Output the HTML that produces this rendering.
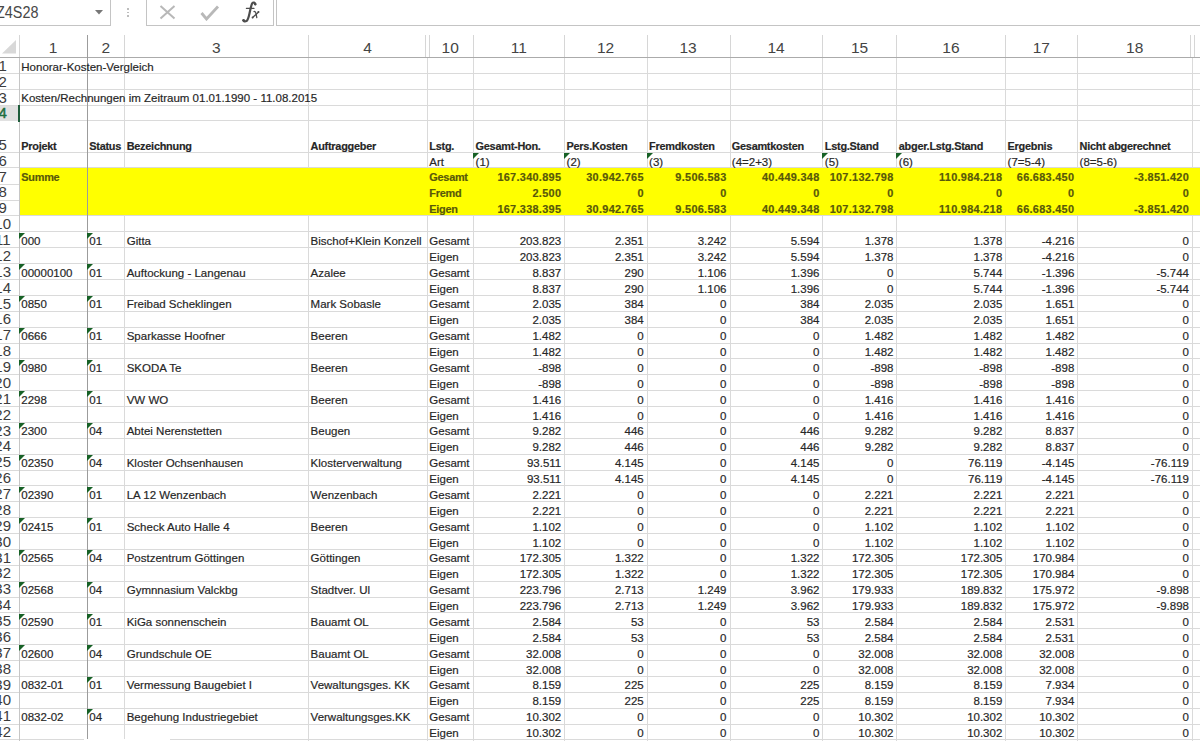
<!DOCTYPE html>
<html><head><meta charset="utf-8"><style>
html,body{margin:0;padding:0;background:#fff;}
body{width:1200px;height:741px;position:relative;overflow:hidden;font-family:"Liberation Sans", sans-serif;}
.box{position:absolute;border:1px solid #c4c4c4;background:#fff;box-sizing:border-box;}
.nb{position:absolute;font-size:15.5px;color:#484848;line-height:18px;transform:scale(0.93,1.1);transform-origin:0 0;}
.ch{position:absolute;top:38.5px;height:18px;line-height:18px;text-align:center;font-size:15.5px;color:#444;}
.rh{position:absolute;left:-13.3px;width:32px;height:16px;line-height:16px;text-align:center;font-size:15px;color:#3c3c3c;}
.rh.sel{color:#1f6e40;-webkit-text-stroke:0.5px #1f6e40;}
.hl{position:absolute;left:0;width:1200px;height:1px;background:#dadada;}
.vl{position:absolute;width:1px;background:#dadada;}
.c{position:absolute;font-size:11.5px;line-height:16px;height:16px;white-space:nowrap;color:#262626;-webkit-text-stroke:0.18px currentColor;}
.tri{position:absolute;width:0;height:0;border-top:6px solid #176126;border-right:6px solid transparent;}
</style></head>
<body>
<div class="box" style="left:-2px;top:-2px;width:112.5px;height:28px"></div>
<div class="nb" style="left:-4.5px;top:3px">Z4S28</div>
<svg style="position:absolute;left:95px;top:10px" width="9" height="5"><path d="M0 0 L8 0 L4 4.5 Z" fill="#777"/></svg>
<div style="position:absolute;left:127px;top:8px;width:1.5px;height:1.5px;background:#bdbdbd"></div>
<div style="position:absolute;left:127px;top:11.5px;width:1.5px;height:1.5px;background:#bdbdbd"></div>
<div style="position:absolute;left:127px;top:15px;width:1.5px;height:1.5px;background:#bdbdbd"></div>
<div class="box" style="left:146px;top:-2px;width:127.5px;height:28px"></div>
<div class="box" style="left:276px;top:-2px;width:930px;height:28px"></div>
<svg style="position:absolute;left:159px;top:5px" width="18" height="15"><path d="M1.5 1 L15.5 13.5 M15.5 1 L1.5 13.5" stroke="#b8b8b8" stroke-width="2" fill="none"/></svg>
<svg style="position:absolute;left:200px;top:5px" width="20" height="16"><path d="M1.5 8 L6.5 14 L18 1.5" stroke="#b8b8b8" stroke-width="2.8" fill="none"/></svg>
<svg style="position:absolute;left:236px;top:0" width="30" height="25" viewBox="236 0 30 25"><g stroke="#4d4d4d" fill="none" stroke-linecap="round"><path d="M255.4 4.3 C255 2.4 253.2 1.9 252.2 3.4 C251.3 4.9 250.6 8.5 249.7 12.5 C248.8 16.5 248.2 20 246.4 21.1 C245 21.8 243.8 21.3 243.5 20.5" stroke-width="2.2"/><path d="M246.4 8.4 L254 8.4" stroke-width="1.2"/><path d="M254 11.6 C255 11.2 255.6 12 256 13.5 L256.8 17.6" stroke-width="1.3"/><path d="M258.6 12 L252.6 17.6" stroke-width="1.3"/></g><g fill="#4d4d4d"><circle cx="255.1" cy="4" r="1.3"/><circle cx="243.6" cy="20.3" r="1.3"/><circle cx="258.4" cy="12" r="1"/><circle cx="252.6" cy="17.5" r="1"/></g></svg>
<div style="position:absolute;left:0;top:57px;width:1200px;height:1px;background:#ababab"></div>
<svg style="position:absolute;left:0;top:39px" width="17" height="15"><path d="M2 14.5 L16 14.5 L16 1 Z" fill="#d8d8d8"/></svg>
<div style="position:absolute;left:19px;top:35px;width:1px;height:22px;background:#d6d6d6"></div>
<div style="position:absolute;left:87px;top:35px;width:1px;height:22px;background:#9a9a9a"></div>
<div style="position:absolute;left:124px;top:35px;width:1px;height:22px;background:#d6d6d6"></div>
<div style="position:absolute;left:308px;top:35px;width:1px;height:22px;background:#d6d6d6"></div>
<div style="position:absolute;left:425px;top:35px;width:1px;height:22px;background:#d6d6d6"></div>
<div style="position:absolute;left:429px;top:35px;width:1px;height:22px;background:#d6d6d6"></div>
<div style="position:absolute;left:473px;top:35px;width:1px;height:22px;background:#d6d6d6"></div>
<div style="position:absolute;left:564px;top:35px;width:1px;height:22px;background:#d6d6d6"></div>
<div style="position:absolute;left:647px;top:35px;width:1px;height:22px;background:#d6d6d6"></div>
<div style="position:absolute;left:730px;top:35px;width:1px;height:22px;background:#d6d6d6"></div>
<div style="position:absolute;left:822px;top:35px;width:1px;height:22px;background:#d6d6d6"></div>
<div style="position:absolute;left:896px;top:35px;width:1px;height:22px;background:#d6d6d6"></div>
<div style="position:absolute;left:1005px;top:35px;width:1px;height:22px;background:#d6d6d6"></div>
<div style="position:absolute;left:1077px;top:35px;width:1px;height:22px;background:#d6d6d6"></div>
<div style="position:absolute;left:1190px;top:35px;width:1px;height:22px;background:#d6d6d6"></div>
<div style="position:absolute;left:1194px;top:35px;width:1px;height:22px;background:#d6d6d6"></div>
<div class="ch" style="left:19px;width:68px">1</div>
<div class="ch" style="left:87px;width:37.4px">2</div>
<div class="ch" style="left:124.4px;width:183.9px">3</div>
<div class="ch" style="left:308.3px;width:118.7px">4</div>
<div class="ch" style="left:427px;width:46.3px">10</div>
<div class="ch" style="left:473.3px;width:90.95px">11</div>
<div class="ch" style="left:564.25px;width:82.5px">12</div>
<div class="ch" style="left:646.75px;width:82.75px">13</div>
<div class="ch" style="left:729.5px;width:93.0px">14</div>
<div class="ch" style="left:822.5px;width:74.0px">15</div>
<div class="ch" style="left:896.5px;width:108.8px">16</div>
<div class="ch" style="left:1005.3px;width:72.0px">17</div>
<div class="ch" style="left:1077.3px;width:114.7px">18</div>
<div class="hl" style="top:73px"></div>
<div class="hl" style="top:89px"></div>
<div class="hl" style="top:105px"></div>
<div class="hl" style="top:120px"></div>
<div class="hl" style="top:152px"></div>
<div class="hl" style="top:184px;width:19px"></div>
<div class="hl" style="top:200px;width:19px"></div>
<div class="hl" style="top:215px"></div>
<div class="hl" style="top:231px"></div>
<div class="hl" style="top:247px"></div>
<div class="hl" style="top:263px"></div>
<div class="hl" style="top:279px"></div>
<div class="hl" style="top:295px"></div>
<div class="hl" style="top:311px"></div>
<div class="hl" style="top:327px"></div>
<div class="hl" style="top:343px"></div>
<div class="hl" style="top:358px"></div>
<div class="hl" style="top:374px"></div>
<div class="hl" style="top:390px"></div>
<div class="hl" style="top:406px"></div>
<div class="hl" style="top:422px"></div>
<div class="hl" style="top:438px"></div>
<div class="hl" style="top:454px"></div>
<div class="hl" style="top:470px"></div>
<div class="hl" style="top:485px"></div>
<div class="hl" style="top:501px"></div>
<div class="hl" style="top:517px"></div>
<div class="hl" style="top:533px"></div>
<div class="hl" style="top:549px"></div>
<div class="hl" style="top:565px"></div>
<div class="hl" style="top:581px"></div>
<div class="hl" style="top:597px"></div>
<div class="hl" style="top:612px"></div>
<div class="hl" style="top:628px"></div>
<div class="hl" style="top:644px"></div>
<div class="hl" style="top:660px"></div>
<div class="hl" style="top:676px"></div>
<div class="hl" style="top:692px"></div>
<div class="hl" style="top:708px"></div>
<div class="hl" style="top:724px"></div>
<div class="hl" style="top:739px"></div>
<div style="position:absolute;left:20px;top:168px;width:1180px;height:47px;background:#ffff00"></div>
<div class="hl" style="top:167px"></div>
<div class="vl" style="left:19px;top:58px;height:110px"></div>
<div class="vl" style="left:19px;top:215px;height:526px"></div>
<div class="vl" style="left:124px;top:58px;height:110px"></div>
<div class="vl" style="left:124px;top:215px;height:526px"></div>
<div class="vl" style="left:308px;top:58px;height:110px"></div>
<div class="vl" style="left:308px;top:215px;height:526px"></div>
<div class="vl" style="left:427px;top:58px;height:110px"></div>
<div class="vl" style="left:427px;top:215px;height:526px"></div>
<div class="vl" style="left:473px;top:58px;height:110px"></div>
<div class="vl" style="left:473px;top:215px;height:526px"></div>
<div class="vl" style="left:564px;top:58px;height:110px"></div>
<div class="vl" style="left:564px;top:215px;height:526px"></div>
<div class="vl" style="left:647px;top:58px;height:110px"></div>
<div class="vl" style="left:647px;top:215px;height:526px"></div>
<div class="vl" style="left:730px;top:58px;height:110px"></div>
<div class="vl" style="left:730px;top:215px;height:526px"></div>
<div class="vl" style="left:822px;top:58px;height:110px"></div>
<div class="vl" style="left:822px;top:215px;height:526px"></div>
<div class="vl" style="left:896px;top:58px;height:110px"></div>
<div class="vl" style="left:896px;top:215px;height:526px"></div>
<div class="vl" style="left:1005px;top:58px;height:110px"></div>
<div class="vl" style="left:1005px;top:215px;height:526px"></div>
<div class="vl" style="left:1077px;top:58px;height:110px"></div>
<div class="vl" style="left:1077px;top:215px;height:526px"></div>
<div class="vl" style="left:1192px;top:58px;height:110px"></div>
<div class="vl" style="left:1192px;top:215px;height:526px"></div>
<div class="vl" style="left:19px;top:58px;height:683px;background:#c6c6c6"></div>
<div style="position:absolute;left:86.5px;top:35px;width:1.5px;height:706px;background:#9c9c9c"></div>
<div class="rh" style="top:57.7px">1</div>
<div class="rh" style="top:73.6px">2</div>
<div class="rh" style="top:89.6px">3</div>
<div style="position:absolute;left:0;top:106px;width:18px;height:15px;background:#e1e1e1"></div>
<div style="position:absolute;left:18px;top:105px;width:2px;height:17px;background:#1f5c3b"></div>
<div class="rh sel" style="top:105.3px">4</div>
<div class="rh" style="top:136.8px">5</div>
<div class="rh" style="top:152.7px">6</div>
<div class="rh" style="top:168.57px">7</div>
<div class="rh" style="top:184.45px">8</div>
<div class="rh" style="top:200.32px">9</div>
<div class="rh" style="top:216.2px">10</div>
<div class="rh" style="top:232.07px">11</div>
<div class="rh" style="top:247.95px">12</div>
<div class="rh" style="top:263.82px">13</div>
<div class="rh" style="top:279.7px">14</div>
<div class="rh" style="top:295.57px">15</div>
<div class="rh" style="top:311.45px">16</div>
<div class="rh" style="top:327.32px">17</div>
<div class="rh" style="top:343.2px">18</div>
<div class="rh" style="top:359.07px">19</div>
<div class="rh" style="top:374.95px">20</div>
<div class="rh" style="top:390.82px">21</div>
<div class="rh" style="top:406.7px">22</div>
<div class="rh" style="top:422.57px">23</div>
<div class="rh" style="top:438.45px">24</div>
<div class="rh" style="top:454.32px">25</div>
<div class="rh" style="top:470.2px">26</div>
<div class="rh" style="top:486.07px">27</div>
<div class="rh" style="top:501.95px">28</div>
<div class="rh" style="top:517.83px">29</div>
<div class="rh" style="top:533.7px">30</div>
<div class="rh" style="top:549.58px">31</div>
<div class="rh" style="top:565.45px">32</div>
<div class="rh" style="top:581.33px">33</div>
<div class="rh" style="top:597.2px">34</div>
<div class="rh" style="top:613.08px">35</div>
<div class="rh" style="top:628.95px">36</div>
<div class="rh" style="top:644.83px">37</div>
<div class="rh" style="top:660.7px">38</div>
<div class="rh" style="top:676.58px">39</div>
<div class="rh" style="top:692.45px">40</div>
<div class="rh" style="top:708.33px">41</div>
<div class="rh" style="top:724.2px">42</div>
<div class="c" style="top:58.5px;left:21.3px;">Honorar-Kosten-Vergleich</div>
<div class="c" style="top:90.4px;left:21.3px;">Kosten/Rechnungen im Zeitraum 01.01.1990 - 11.08.2015</div>
<div class="c" style="top:137.6px;left:21.3px;font-weight:bold;font-size:10.9px;letter-spacing:-0.25px;">Projekt</div>
<div class="c" style="top:137.6px;left:89.3px;font-weight:bold;font-size:10.9px;letter-spacing:-0.25px;">Status</div>
<div class="c" style="top:137.6px;left:126.7px;font-weight:bold;font-size:10.9px;letter-spacing:-0.25px;">Bezeichnung</div>
<div class="c" style="top:137.6px;left:310.6px;font-weight:bold;font-size:10.9px;letter-spacing:-0.25px;">Auftraggeber</div>
<div class="c" style="top:137.6px;left:429.3px;font-weight:bold;font-size:10.9px;letter-spacing:-0.25px;">Lstg.</div>
<div class="c" style="top:137.6px;left:475.6px;font-weight:bold;font-size:10.9px;letter-spacing:-0.25px;">Gesamt-Hon.</div>
<div class="c" style="top:137.6px;left:566.55px;font-weight:bold;font-size:10.9px;letter-spacing:-0.25px;">Pers.Kosten</div>
<div class="c" style="top:137.6px;left:649.05px;font-weight:bold;font-size:10.9px;letter-spacing:-0.25px;">Fremdkosten</div>
<div class="c" style="top:137.6px;left:731.8px;font-weight:bold;font-size:10.9px;letter-spacing:-0.25px;">Gesamtkosten</div>
<div class="c" style="top:137.6px;left:824.8px;font-weight:bold;font-size:10.9px;letter-spacing:-0.25px;">Lstg.Stand</div>
<div class="c" style="top:137.6px;left:898.8px;font-weight:bold;font-size:10.9px;letter-spacing:-0.25px;">abger.Lstg.Stand</div>
<div class="c" style="top:137.6px;left:1007.6px;font-weight:bold;font-size:10.9px;letter-spacing:-0.25px;">Ergebnis</div>
<div class="c" style="top:137.6px;left:1079.6px;font-weight:bold;font-size:10.9px;letter-spacing:-0.25px;">Nicht abgerechnet</div>
<div class="c" style="top:153.5px;left:429.3px;">Art</div>
<div class="c" style="top:153.5px;left:475.6px;">(1)</div>
<div class="tri" style="left:473px;top:152.5px"></div>
<div class="c" style="top:153.5px;left:566.55px;">(2)</div>
<div class="tri" style="left:564px;top:152.5px"></div>
<div class="c" style="top:153.5px;left:649.05px;">(3)</div>
<div class="tri" style="left:647px;top:152.5px"></div>
<div class="c" style="top:153.5px;left:731.8px;">(4=2+3)</div>
<div class="c" style="top:153.5px;left:824.8px;">(5)</div>
<div class="tri" style="left:822px;top:152.5px"></div>
<div class="c" style="top:153.5px;left:898.8px;">(6)</div>
<div class="tri" style="left:896px;top:152.5px"></div>
<div class="c" style="top:153.5px;left:1007.6px;">(7=5-4)</div>
<div class="c" style="top:153.5px;left:1079.6px;">(8=5-6)</div>
<div class="c" style="top:169.38px;left:21.3px;font-weight:bold;font-size:10.9px;letter-spacing:-0.25px;color:#58580a;">Summe</div>
<div class="c" style="top:169.38px;left:429.3px;font-weight:bold;font-size:10.9px;letter-spacing:-0.25px;color:#58580a;">Gesamt</div>
<div class="c" style="top:169.38px;right:638.75px;font-weight:bold;font-size:10.9px;letter-spacing:0.3px;color:#58580a;">167.340.895</div>
<div class="c" style="top:169.38px;right:556.25px;font-weight:bold;font-size:10.9px;letter-spacing:0.3px;color:#58580a;">30.942.765</div>
<div class="c" style="top:169.38px;right:473.5px;font-weight:bold;font-size:10.9px;letter-spacing:0.3px;color:#58580a;">9.506.583</div>
<div class="c" style="top:169.38px;right:380.5px;font-weight:bold;font-size:10.9px;letter-spacing:0.3px;color:#58580a;">40.449.348</div>
<div class="c" style="top:169.38px;right:306.5px;font-weight:bold;font-size:10.9px;letter-spacing:0.3px;color:#58580a;">107.132.798</div>
<div class="c" style="top:169.38px;right:197.7px;font-weight:bold;font-size:10.9px;letter-spacing:0.3px;color:#58580a;">110.984.218</div>
<div class="c" style="top:169.38px;right:125.7px;font-weight:bold;font-size:10.9px;letter-spacing:0.3px;color:#58580a;">66.683.450</div>
<div class="c" style="top:169.38px;right:11px;font-weight:bold;font-size:10.9px;letter-spacing:0.3px;color:#58580a;">-3.851.420</div>
<div class="c" style="top:185.25px;left:429.3px;font-weight:bold;font-size:10.9px;letter-spacing:-0.25px;color:#58580a;">Fremd</div>
<div class="c" style="top:185.25px;right:638.75px;font-weight:bold;font-size:10.9px;letter-spacing:0.3px;color:#58580a;">2.500</div>
<div class="c" style="top:185.25px;right:556.25px;font-weight:bold;font-size:10.9px;letter-spacing:0.3px;color:#58580a;">0</div>
<div class="c" style="top:185.25px;right:473.5px;font-weight:bold;font-size:10.9px;letter-spacing:0.3px;color:#58580a;">0</div>
<div class="c" style="top:185.25px;right:380.5px;font-weight:bold;font-size:10.9px;letter-spacing:0.3px;color:#58580a;">0</div>
<div class="c" style="top:185.25px;right:306.5px;font-weight:bold;font-size:10.9px;letter-spacing:0.3px;color:#58580a;">0</div>
<div class="c" style="top:185.25px;right:197.7px;font-weight:bold;font-size:10.9px;letter-spacing:0.3px;color:#58580a;">0</div>
<div class="c" style="top:185.25px;right:125.7px;font-weight:bold;font-size:10.9px;letter-spacing:0.3px;color:#58580a;">0</div>
<div class="c" style="top:185.25px;right:11px;font-weight:bold;font-size:10.9px;letter-spacing:0.3px;color:#58580a;">0</div>
<div class="c" style="top:201.12px;left:429.3px;font-weight:bold;font-size:10.9px;letter-spacing:-0.25px;color:#58580a;">Eigen</div>
<div class="c" style="top:201.12px;right:638.75px;font-weight:bold;font-size:10.9px;letter-spacing:0.3px;color:#58580a;">167.338.395</div>
<div class="c" style="top:201.12px;right:556.25px;font-weight:bold;font-size:10.9px;letter-spacing:0.3px;color:#58580a;">30.942.765</div>
<div class="c" style="top:201.12px;right:473.5px;font-weight:bold;font-size:10.9px;letter-spacing:0.3px;color:#58580a;">9.506.583</div>
<div class="c" style="top:201.12px;right:380.5px;font-weight:bold;font-size:10.9px;letter-spacing:0.3px;color:#58580a;">40.449.348</div>
<div class="c" style="top:201.12px;right:306.5px;font-weight:bold;font-size:10.9px;letter-spacing:0.3px;color:#58580a;">107.132.798</div>
<div class="c" style="top:201.12px;right:197.7px;font-weight:bold;font-size:10.9px;letter-spacing:0.3px;color:#58580a;">110.984.218</div>
<div class="c" style="top:201.12px;right:125.7px;font-weight:bold;font-size:10.9px;letter-spacing:0.3px;color:#58580a;">66.683.450</div>
<div class="c" style="top:201.12px;right:11px;font-weight:bold;font-size:10.9px;letter-spacing:0.3px;color:#58580a;">-3.851.420</div>
<div class="c" style="top:232.88px;left:21.3px;">000</div>
<div class="tri" style="left:19px;top:232.5px"></div>
<div class="c" style="top:232.88px;left:89.3px;">01</div>
<div class="tri" style="left:87px;top:232.5px"></div>
<div class="c" style="top:232.88px;left:126.7px;">Gitta</div>
<div class="c" style="top:232.88px;left:310.6px;">Bischof+Klein Konzell</div>
<div class="c" style="top:232.88px;left:429.3px;">Gesamt</div>
<div class="c" style="top:248.75px;left:429.3px;">Eigen</div>
<div class="c" style="top:232.88px;right:638.75px;">203.823</div>
<div class="c" style="top:248.75px;right:638.75px;">203.823</div>
<div class="c" style="top:232.88px;right:556.25px;">2.351</div>
<div class="c" style="top:248.75px;right:556.25px;">2.351</div>
<div class="c" style="top:232.88px;right:473.5px;">3.242</div>
<div class="c" style="top:248.75px;right:473.5px;">3.242</div>
<div class="c" style="top:232.88px;right:380.5px;">5.594</div>
<div class="c" style="top:248.75px;right:380.5px;">5.594</div>
<div class="c" style="top:232.88px;right:306.5px;">1.378</div>
<div class="c" style="top:248.75px;right:306.5px;">1.378</div>
<div class="c" style="top:232.88px;right:197.7px;">1.378</div>
<div class="c" style="top:248.75px;right:197.7px;">1.378</div>
<div class="c" style="top:232.88px;right:125.7px;">-4.216</div>
<div class="c" style="top:248.75px;right:125.7px;">-4.216</div>
<div class="c" style="top:232.88px;right:11px;">0</div>
<div class="c" style="top:248.75px;right:11px;">0</div>
<div class="c" style="top:264.62px;left:21.3px;">00000100</div>
<div class="tri" style="left:19px;top:263.5px"></div>
<div class="c" style="top:264.62px;left:89.3px;">01</div>
<div class="tri" style="left:87px;top:263.5px"></div>
<div class="c" style="top:264.62px;left:126.7px;">Auftockung - Langenau</div>
<div class="c" style="top:264.62px;left:310.6px;">Azalee</div>
<div class="c" style="top:264.62px;left:429.3px;">Gesamt</div>
<div class="c" style="top:280.5px;left:429.3px;">Eigen</div>
<div class="c" style="top:264.62px;right:638.75px;">8.837</div>
<div class="c" style="top:280.5px;right:638.75px;">8.837</div>
<div class="c" style="top:264.62px;right:556.25px;">290</div>
<div class="c" style="top:280.5px;right:556.25px;">290</div>
<div class="c" style="top:264.62px;right:473.5px;">1.106</div>
<div class="c" style="top:280.5px;right:473.5px;">1.106</div>
<div class="c" style="top:264.62px;right:380.5px;">1.396</div>
<div class="c" style="top:280.5px;right:380.5px;">1.396</div>
<div class="c" style="top:264.62px;right:306.5px;">0</div>
<div class="c" style="top:280.5px;right:306.5px;">0</div>
<div class="c" style="top:264.62px;right:197.7px;">5.744</div>
<div class="c" style="top:280.5px;right:197.7px;">5.744</div>
<div class="c" style="top:264.62px;right:125.7px;">-1.396</div>
<div class="c" style="top:280.5px;right:125.7px;">-1.396</div>
<div class="c" style="top:264.62px;right:11px;">-5.744</div>
<div class="c" style="top:280.5px;right:11px;">-5.744</div>
<div class="c" style="top:296.38px;left:21.3px;">0850</div>
<div class="tri" style="left:19px;top:295.5px"></div>
<div class="c" style="top:296.38px;left:89.3px;">01</div>
<div class="tri" style="left:87px;top:295.5px"></div>
<div class="c" style="top:296.38px;left:126.7px;">Freibad Scheklingen</div>
<div class="c" style="top:296.38px;left:310.6px;">Mark Sobasle</div>
<div class="c" style="top:296.38px;left:429.3px;">Gesamt</div>
<div class="c" style="top:312.25px;left:429.3px;">Eigen</div>
<div class="c" style="top:296.38px;right:638.75px;">2.035</div>
<div class="c" style="top:312.25px;right:638.75px;">2.035</div>
<div class="c" style="top:296.38px;right:556.25px;">384</div>
<div class="c" style="top:312.25px;right:556.25px;">384</div>
<div class="c" style="top:296.38px;right:473.5px;">0</div>
<div class="c" style="top:312.25px;right:473.5px;">0</div>
<div class="c" style="top:296.38px;right:380.5px;">384</div>
<div class="c" style="top:312.25px;right:380.5px;">384</div>
<div class="c" style="top:296.38px;right:306.5px;">2.035</div>
<div class="c" style="top:312.25px;right:306.5px;">2.035</div>
<div class="c" style="top:296.38px;right:197.7px;">2.035</div>
<div class="c" style="top:312.25px;right:197.7px;">2.035</div>
<div class="c" style="top:296.38px;right:125.7px;">1.651</div>
<div class="c" style="top:312.25px;right:125.7px;">1.651</div>
<div class="c" style="top:296.38px;right:11px;">0</div>
<div class="c" style="top:312.25px;right:11px;">0</div>
<div class="c" style="top:328.12px;left:21.3px;">0666</div>
<div class="tri" style="left:19px;top:327.5px"></div>
<div class="c" style="top:328.12px;left:89.3px;">01</div>
<div class="tri" style="left:87px;top:327.5px"></div>
<div class="c" style="top:328.12px;left:126.7px;">Sparkasse Hoofner</div>
<div class="c" style="top:328.12px;left:310.6px;">Beeren</div>
<div class="c" style="top:328.12px;left:429.3px;">Gesamt</div>
<div class="c" style="top:344.0px;left:429.3px;">Eigen</div>
<div class="c" style="top:328.12px;right:638.75px;">1.482</div>
<div class="c" style="top:344.0px;right:638.75px;">1.482</div>
<div class="c" style="top:328.12px;right:556.25px;">0</div>
<div class="c" style="top:344.0px;right:556.25px;">0</div>
<div class="c" style="top:328.12px;right:473.5px;">0</div>
<div class="c" style="top:344.0px;right:473.5px;">0</div>
<div class="c" style="top:328.12px;right:380.5px;">0</div>
<div class="c" style="top:344.0px;right:380.5px;">0</div>
<div class="c" style="top:328.12px;right:306.5px;">1.482</div>
<div class="c" style="top:344.0px;right:306.5px;">1.482</div>
<div class="c" style="top:328.12px;right:197.7px;">1.482</div>
<div class="c" style="top:344.0px;right:197.7px;">1.482</div>
<div class="c" style="top:328.12px;right:125.7px;">1.482</div>
<div class="c" style="top:344.0px;right:125.7px;">1.482</div>
<div class="c" style="top:328.12px;right:11px;">0</div>
<div class="c" style="top:344.0px;right:11px;">0</div>
<div class="c" style="top:359.88px;left:21.3px;">0980</div>
<div class="tri" style="left:19px;top:359.5px"></div>
<div class="c" style="top:359.88px;left:89.3px;">01</div>
<div class="tri" style="left:87px;top:359.5px"></div>
<div class="c" style="top:359.88px;left:126.7px;">SKODA Te</div>
<div class="c" style="top:359.88px;left:310.6px;">Beeren</div>
<div class="c" style="top:359.88px;left:429.3px;">Gesamt</div>
<div class="c" style="top:375.75px;left:429.3px;">Eigen</div>
<div class="c" style="top:359.88px;right:638.75px;">-898</div>
<div class="c" style="top:375.75px;right:638.75px;">-898</div>
<div class="c" style="top:359.88px;right:556.25px;">0</div>
<div class="c" style="top:375.75px;right:556.25px;">0</div>
<div class="c" style="top:359.88px;right:473.5px;">0</div>
<div class="c" style="top:375.75px;right:473.5px;">0</div>
<div class="c" style="top:359.88px;right:380.5px;">0</div>
<div class="c" style="top:375.75px;right:380.5px;">0</div>
<div class="c" style="top:359.88px;right:306.5px;">-898</div>
<div class="c" style="top:375.75px;right:306.5px;">-898</div>
<div class="c" style="top:359.88px;right:197.7px;">-898</div>
<div class="c" style="top:375.75px;right:197.7px;">-898</div>
<div class="c" style="top:359.88px;right:125.7px;">-898</div>
<div class="c" style="top:375.75px;right:125.7px;">-898</div>
<div class="c" style="top:359.88px;right:11px;">0</div>
<div class="c" style="top:375.75px;right:11px;">0</div>
<div class="c" style="top:391.62px;left:21.3px;">2298</div>
<div class="tri" style="left:19px;top:390.5px"></div>
<div class="c" style="top:391.62px;left:89.3px;">01</div>
<div class="tri" style="left:87px;top:390.5px"></div>
<div class="c" style="top:391.62px;left:126.7px;">VW WO</div>
<div class="c" style="top:391.62px;left:310.6px;">Beeren</div>
<div class="c" style="top:391.62px;left:429.3px;">Gesamt</div>
<div class="c" style="top:407.5px;left:429.3px;">Eigen</div>
<div class="c" style="top:391.62px;right:638.75px;">1.416</div>
<div class="c" style="top:407.5px;right:638.75px;">1.416</div>
<div class="c" style="top:391.62px;right:556.25px;">0</div>
<div class="c" style="top:407.5px;right:556.25px;">0</div>
<div class="c" style="top:391.62px;right:473.5px;">0</div>
<div class="c" style="top:407.5px;right:473.5px;">0</div>
<div class="c" style="top:391.62px;right:380.5px;">0</div>
<div class="c" style="top:407.5px;right:380.5px;">0</div>
<div class="c" style="top:391.62px;right:306.5px;">1.416</div>
<div class="c" style="top:407.5px;right:306.5px;">1.416</div>
<div class="c" style="top:391.62px;right:197.7px;">1.416</div>
<div class="c" style="top:407.5px;right:197.7px;">1.416</div>
<div class="c" style="top:391.62px;right:125.7px;">1.416</div>
<div class="c" style="top:407.5px;right:125.7px;">1.416</div>
<div class="c" style="top:391.62px;right:11px;">0</div>
<div class="c" style="top:407.5px;right:11px;">0</div>
<div class="c" style="top:423.38px;left:21.3px;">2300</div>
<div class="tri" style="left:19px;top:422.5px"></div>
<div class="c" style="top:423.38px;left:89.3px;">04</div>
<div class="tri" style="left:87px;top:422.5px"></div>
<div class="c" style="top:423.38px;left:126.7px;">Abtei Nerenstetten</div>
<div class="c" style="top:423.38px;left:310.6px;">Beugen</div>
<div class="c" style="top:423.38px;left:429.3px;">Gesamt</div>
<div class="c" style="top:439.25px;left:429.3px;">Eigen</div>
<div class="c" style="top:423.38px;right:638.75px;">9.282</div>
<div class="c" style="top:439.25px;right:638.75px;">9.282</div>
<div class="c" style="top:423.38px;right:556.25px;">446</div>
<div class="c" style="top:439.25px;right:556.25px;">446</div>
<div class="c" style="top:423.38px;right:473.5px;">0</div>
<div class="c" style="top:439.25px;right:473.5px;">0</div>
<div class="c" style="top:423.38px;right:380.5px;">446</div>
<div class="c" style="top:439.25px;right:380.5px;">446</div>
<div class="c" style="top:423.38px;right:306.5px;">9.282</div>
<div class="c" style="top:439.25px;right:306.5px;">9.282</div>
<div class="c" style="top:423.38px;right:197.7px;">9.282</div>
<div class="c" style="top:439.25px;right:197.7px;">9.282</div>
<div class="c" style="top:423.38px;right:125.7px;">8.837</div>
<div class="c" style="top:439.25px;right:125.7px;">8.837</div>
<div class="c" style="top:423.38px;right:11px;">0</div>
<div class="c" style="top:439.25px;right:11px;">0</div>
<div class="c" style="top:455.12px;left:21.3px;">02350</div>
<div class="tri" style="left:19px;top:454.5px"></div>
<div class="c" style="top:455.12px;left:89.3px;">04</div>
<div class="tri" style="left:87px;top:454.5px"></div>
<div class="c" style="top:455.12px;left:126.7px;">Kloster Ochsenhausen</div>
<div class="c" style="top:455.12px;left:310.6px;">Klosterverwaltung</div>
<div class="c" style="top:455.12px;left:429.3px;">Gesamt</div>
<div class="c" style="top:471.0px;left:429.3px;">Eigen</div>
<div class="c" style="top:455.12px;right:638.75px;">93.511</div>
<div class="c" style="top:471.0px;right:638.75px;">93.511</div>
<div class="c" style="top:455.12px;right:556.25px;">4.145</div>
<div class="c" style="top:471.0px;right:556.25px;">4.145</div>
<div class="c" style="top:455.12px;right:473.5px;">0</div>
<div class="c" style="top:471.0px;right:473.5px;">0</div>
<div class="c" style="top:455.12px;right:380.5px;">4.145</div>
<div class="c" style="top:471.0px;right:380.5px;">4.145</div>
<div class="c" style="top:455.12px;right:306.5px;">0</div>
<div class="c" style="top:471.0px;right:306.5px;">0</div>
<div class="c" style="top:455.12px;right:197.7px;">76.119</div>
<div class="c" style="top:471.0px;right:197.7px;">76.119</div>
<div class="c" style="top:455.12px;right:125.7px;">-4.145</div>
<div class="c" style="top:471.0px;right:125.7px;">-4.145</div>
<div class="c" style="top:455.12px;right:11px;">-76.119</div>
<div class="c" style="top:471.0px;right:11px;">-76.119</div>
<div class="c" style="top:486.88px;left:21.3px;">02390</div>
<div class="tri" style="left:19px;top:486.5px"></div>
<div class="c" style="top:486.88px;left:89.3px;">01</div>
<div class="tri" style="left:87px;top:486.5px"></div>
<div class="c" style="top:486.88px;left:126.7px;">LA 12 Wenzenbach</div>
<div class="c" style="top:486.88px;left:310.6px;">Wenzenbach</div>
<div class="c" style="top:486.88px;left:429.3px;">Gesamt</div>
<div class="c" style="top:502.75px;left:429.3px;">Eigen</div>
<div class="c" style="top:486.88px;right:638.75px;">2.221</div>
<div class="c" style="top:502.75px;right:638.75px;">2.221</div>
<div class="c" style="top:486.88px;right:556.25px;">0</div>
<div class="c" style="top:502.75px;right:556.25px;">0</div>
<div class="c" style="top:486.88px;right:473.5px;">0</div>
<div class="c" style="top:502.75px;right:473.5px;">0</div>
<div class="c" style="top:486.88px;right:380.5px;">0</div>
<div class="c" style="top:502.75px;right:380.5px;">0</div>
<div class="c" style="top:486.88px;right:306.5px;">2.221</div>
<div class="c" style="top:502.75px;right:306.5px;">2.221</div>
<div class="c" style="top:486.88px;right:197.7px;">2.221</div>
<div class="c" style="top:502.75px;right:197.7px;">2.221</div>
<div class="c" style="top:486.88px;right:125.7px;">2.221</div>
<div class="c" style="top:502.75px;right:125.7px;">2.221</div>
<div class="c" style="top:486.88px;right:11px;">0</div>
<div class="c" style="top:502.75px;right:11px;">0</div>
<div class="c" style="top:518.62px;left:21.3px;">02415</div>
<div class="tri" style="left:19px;top:517.5px"></div>
<div class="c" style="top:518.62px;left:89.3px;">01</div>
<div class="tri" style="left:87px;top:517.5px"></div>
<div class="c" style="top:518.62px;left:126.7px;">Scheck Auto Halle 4</div>
<div class="c" style="top:518.62px;left:310.6px;">Beeren</div>
<div class="c" style="top:518.62px;left:429.3px;">Gesamt</div>
<div class="c" style="top:534.5px;left:429.3px;">Eigen</div>
<div class="c" style="top:518.62px;right:638.75px;">1.102</div>
<div class="c" style="top:534.5px;right:638.75px;">1.102</div>
<div class="c" style="top:518.62px;right:556.25px;">0</div>
<div class="c" style="top:534.5px;right:556.25px;">0</div>
<div class="c" style="top:518.62px;right:473.5px;">0</div>
<div class="c" style="top:534.5px;right:473.5px;">0</div>
<div class="c" style="top:518.62px;right:380.5px;">0</div>
<div class="c" style="top:534.5px;right:380.5px;">0</div>
<div class="c" style="top:518.62px;right:306.5px;">1.102</div>
<div class="c" style="top:534.5px;right:306.5px;">1.102</div>
<div class="c" style="top:518.62px;right:197.7px;">1.102</div>
<div class="c" style="top:534.5px;right:197.7px;">1.102</div>
<div class="c" style="top:518.62px;right:125.7px;">1.102</div>
<div class="c" style="top:534.5px;right:125.7px;">1.102</div>
<div class="c" style="top:518.62px;right:11px;">0</div>
<div class="c" style="top:534.5px;right:11px;">0</div>
<div class="c" style="top:550.38px;left:21.3px;">02565</div>
<div class="tri" style="left:19px;top:549.5px"></div>
<div class="c" style="top:550.38px;left:89.3px;">04</div>
<div class="tri" style="left:87px;top:549.5px"></div>
<div class="c" style="top:550.38px;left:126.7px;">Postzentrum Göttingen</div>
<div class="c" style="top:550.38px;left:310.6px;">Göttingen</div>
<div class="c" style="top:550.38px;left:429.3px;">Gesamt</div>
<div class="c" style="top:566.25px;left:429.3px;">Eigen</div>
<div class="c" style="top:550.38px;right:638.75px;">172.305</div>
<div class="c" style="top:566.25px;right:638.75px;">172.305</div>
<div class="c" style="top:550.38px;right:556.25px;">1.322</div>
<div class="c" style="top:566.25px;right:556.25px;">1.322</div>
<div class="c" style="top:550.38px;right:473.5px;">0</div>
<div class="c" style="top:566.25px;right:473.5px;">0</div>
<div class="c" style="top:550.38px;right:380.5px;">1.322</div>
<div class="c" style="top:566.25px;right:380.5px;">1.322</div>
<div class="c" style="top:550.38px;right:306.5px;">172.305</div>
<div class="c" style="top:566.25px;right:306.5px;">172.305</div>
<div class="c" style="top:550.38px;right:197.7px;">172.305</div>
<div class="c" style="top:566.25px;right:197.7px;">172.305</div>
<div class="c" style="top:550.38px;right:125.7px;">170.984</div>
<div class="c" style="top:566.25px;right:125.7px;">170.984</div>
<div class="c" style="top:550.38px;right:11px;">0</div>
<div class="c" style="top:566.25px;right:11px;">0</div>
<div class="c" style="top:582.12px;left:21.3px;">02568</div>
<div class="tri" style="left:19px;top:581.5px"></div>
<div class="c" style="top:582.12px;left:89.3px;">04</div>
<div class="tri" style="left:87px;top:581.5px"></div>
<div class="c" style="top:582.12px;left:126.7px;">Gymnnasium Valckbg</div>
<div class="c" style="top:582.12px;left:310.6px;">Stadtver. Ul</div>
<div class="c" style="top:582.12px;left:429.3px;">Gesamt</div>
<div class="c" style="top:598.0px;left:429.3px;">Eigen</div>
<div class="c" style="top:582.12px;right:638.75px;">223.796</div>
<div class="c" style="top:598.0px;right:638.75px;">223.796</div>
<div class="c" style="top:582.12px;right:556.25px;">2.713</div>
<div class="c" style="top:598.0px;right:556.25px;">2.713</div>
<div class="c" style="top:582.12px;right:473.5px;">1.249</div>
<div class="c" style="top:598.0px;right:473.5px;">1.249</div>
<div class="c" style="top:582.12px;right:380.5px;">3.962</div>
<div class="c" style="top:598.0px;right:380.5px;">3.962</div>
<div class="c" style="top:582.12px;right:306.5px;">179.933</div>
<div class="c" style="top:598.0px;right:306.5px;">179.933</div>
<div class="c" style="top:582.12px;right:197.7px;">189.832</div>
<div class="c" style="top:598.0px;right:197.7px;">189.832</div>
<div class="c" style="top:582.12px;right:125.7px;">175.972</div>
<div class="c" style="top:598.0px;right:125.7px;">175.972</div>
<div class="c" style="top:582.12px;right:11px;">-9.898</div>
<div class="c" style="top:598.0px;right:11px;">-9.898</div>
<div class="c" style="top:613.88px;left:21.3px;">02590</div>
<div class="tri" style="left:19px;top:613.5px"></div>
<div class="c" style="top:613.88px;left:89.3px;">01</div>
<div class="tri" style="left:87px;top:613.5px"></div>
<div class="c" style="top:613.88px;left:126.7px;">KiGa sonnenschein</div>
<div class="c" style="top:613.88px;left:310.6px;">Bauamt OL</div>
<div class="c" style="top:613.88px;left:429.3px;">Gesamt</div>
<div class="c" style="top:629.75px;left:429.3px;">Eigen</div>
<div class="c" style="top:613.88px;right:638.75px;">2.584</div>
<div class="c" style="top:629.75px;right:638.75px;">2.584</div>
<div class="c" style="top:613.88px;right:556.25px;">53</div>
<div class="c" style="top:629.75px;right:556.25px;">53</div>
<div class="c" style="top:613.88px;right:473.5px;">0</div>
<div class="c" style="top:629.75px;right:473.5px;">0</div>
<div class="c" style="top:613.88px;right:380.5px;">53</div>
<div class="c" style="top:629.75px;right:380.5px;">53</div>
<div class="c" style="top:613.88px;right:306.5px;">2.584</div>
<div class="c" style="top:629.75px;right:306.5px;">2.584</div>
<div class="c" style="top:613.88px;right:197.7px;">2.584</div>
<div class="c" style="top:629.75px;right:197.7px;">2.584</div>
<div class="c" style="top:613.88px;right:125.7px;">2.531</div>
<div class="c" style="top:629.75px;right:125.7px;">2.531</div>
<div class="c" style="top:613.88px;right:11px;">0</div>
<div class="c" style="top:629.75px;right:11px;">0</div>
<div class="c" style="top:645.62px;left:21.3px;">02600</div>
<div class="tri" style="left:19px;top:644.5px"></div>
<div class="c" style="top:645.62px;left:89.3px;">04</div>
<div class="tri" style="left:87px;top:644.5px"></div>
<div class="c" style="top:645.62px;left:126.7px;">Grundschule OE</div>
<div class="c" style="top:645.62px;left:310.6px;">Bauamt OL</div>
<div class="c" style="top:645.62px;left:429.3px;">Gesamt</div>
<div class="c" style="top:661.5px;left:429.3px;">Eigen</div>
<div class="c" style="top:645.62px;right:638.75px;">32.008</div>
<div class="c" style="top:661.5px;right:638.75px;">32.008</div>
<div class="c" style="top:645.62px;right:556.25px;">0</div>
<div class="c" style="top:661.5px;right:556.25px;">0</div>
<div class="c" style="top:645.62px;right:473.5px;">0</div>
<div class="c" style="top:661.5px;right:473.5px;">0</div>
<div class="c" style="top:645.62px;right:380.5px;">0</div>
<div class="c" style="top:661.5px;right:380.5px;">0</div>
<div class="c" style="top:645.62px;right:306.5px;">32.008</div>
<div class="c" style="top:661.5px;right:306.5px;">32.008</div>
<div class="c" style="top:645.62px;right:197.7px;">32.008</div>
<div class="c" style="top:661.5px;right:197.7px;">32.008</div>
<div class="c" style="top:645.62px;right:125.7px;">32.008</div>
<div class="c" style="top:661.5px;right:125.7px;">32.008</div>
<div class="c" style="top:645.62px;right:11px;">0</div>
<div class="c" style="top:661.5px;right:11px;">0</div>
<div class="c" style="top:677.38px;left:21.3px;">0832-01</div>
<div class="c" style="top:677.38px;left:89.3px;">01</div>
<div class="tri" style="left:87px;top:676.5px"></div>
<div class="c" style="top:677.38px;left:126.7px;">Vermessung Baugebiet I</div>
<div class="c" style="top:677.38px;left:310.6px;">Vewaltungsges. KK</div>
<div class="c" style="top:677.38px;left:429.3px;">Gesamt</div>
<div class="c" style="top:693.25px;left:429.3px;">Eigen</div>
<div class="c" style="top:677.38px;right:638.75px;">8.159</div>
<div class="c" style="top:693.25px;right:638.75px;">8.159</div>
<div class="c" style="top:677.38px;right:556.25px;">225</div>
<div class="c" style="top:693.25px;right:556.25px;">225</div>
<div class="c" style="top:677.38px;right:473.5px;">0</div>
<div class="c" style="top:693.25px;right:473.5px;">0</div>
<div class="c" style="top:677.38px;right:380.5px;">225</div>
<div class="c" style="top:693.25px;right:380.5px;">225</div>
<div class="c" style="top:677.38px;right:306.5px;">8.159</div>
<div class="c" style="top:693.25px;right:306.5px;">8.159</div>
<div class="c" style="top:677.38px;right:197.7px;">8.159</div>
<div class="c" style="top:693.25px;right:197.7px;">8.159</div>
<div class="c" style="top:677.38px;right:125.7px;">7.934</div>
<div class="c" style="top:693.25px;right:125.7px;">7.934</div>
<div class="c" style="top:677.38px;right:11px;">0</div>
<div class="c" style="top:693.25px;right:11px;">0</div>
<div class="c" style="top:709.12px;left:21.3px;">0832-02</div>
<div class="c" style="top:709.12px;left:89.3px;">04</div>
<div class="tri" style="left:87px;top:708.5px"></div>
<div class="c" style="top:709.12px;left:126.7px;">Begehung Industriegebiet</div>
<div class="c" style="top:709.12px;left:310.6px;">Verwaltungsges.KK</div>
<div class="c" style="top:709.12px;left:429.3px;">Gesamt</div>
<div class="c" style="top:725.0px;left:429.3px;">Eigen</div>
<div class="c" style="top:709.12px;right:638.75px;">10.302</div>
<div class="c" style="top:725.0px;right:638.75px;">10.302</div>
<div class="c" style="top:709.12px;right:556.25px;">0</div>
<div class="c" style="top:725.0px;right:556.25px;">0</div>
<div class="c" style="top:709.12px;right:473.5px;">0</div>
<div class="c" style="top:725.0px;right:473.5px;">0</div>
<div class="c" style="top:709.12px;right:380.5px;">0</div>
<div class="c" style="top:725.0px;right:380.5px;">0</div>
<div class="c" style="top:709.12px;right:306.5px;">10.302</div>
<div class="c" style="top:725.0px;right:306.5px;">10.302</div>
<div class="c" style="top:709.12px;right:197.7px;">10.302</div>
<div class="c" style="top:725.0px;right:197.7px;">10.302</div>
<div class="c" style="top:709.12px;right:125.7px;">10.302</div>
<div class="c" style="top:725.0px;right:125.7px;">10.302</div>
<div class="c" style="top:709.12px;right:11px;">0</div>
<div class="c" style="top:725.0px;right:11px;">0</div>
<div style="position:absolute;left:84px;top:739px;width:86px;height:2px;background:#fff"></div>
</body></html>
